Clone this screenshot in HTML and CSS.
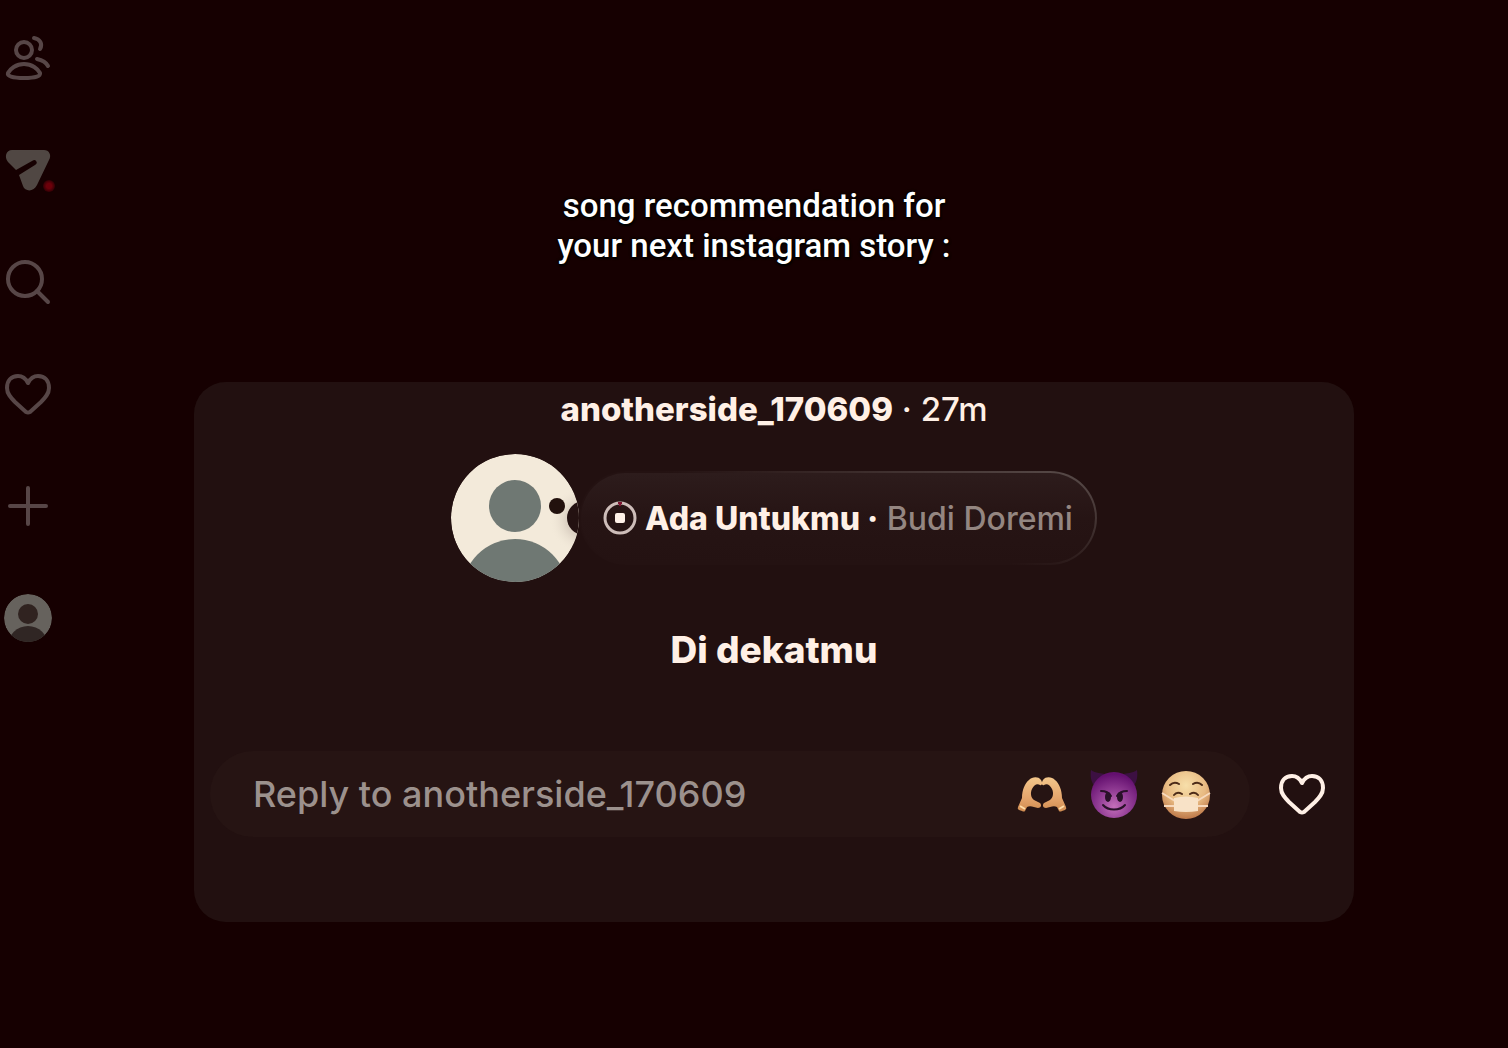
FILE: index.html
```html
<!DOCTYPE html>
<html lang="en">
	<head>
		<meta charset="utf-8">
		<title>Story</title>
		<link rel="stylesheet" href="styles.css">
	</head>
	<body>
		<nav class="sidebar">
			<a href="#friends" aria-label="Friends">
				<svg class="icon" viewBox="0 0 48 48">
					<circle cx="20" cy="16" r="8"/>
					<path d="M4 39C6 35 12 30 20 30S34 35 36 39C37 42 32 44 20 44S3 42 4 39Z"/>
					<path d="M30 4C36 5 39 10 36 15M33 25C38 26 42 28 44 32"/>
				</svg>
			</a>
			<a href="#messages" aria-label="Messages">
				<svg class="icon" viewBox="0 0 48 48">
					<path class="solid" d="M8 4H40C45 4 48 9 45 14L33 39C30 46 21 46 19 40L15 29L31 19Q34 17 32 15Q31 13 28 15L12 24L4 16C0 11 2 4 8 4Z"/>
				</svg>
				<span class="badge"></span>
			</a>
			<a href="#search" aria-label="Search">
				<svg class="icon" viewBox="0 0 48 48">
					<circle cx="21" cy="21" r="17"/>
					<path d="M33 33L44 44"/>
				</svg>
			</a>
			<a href="#activity" aria-label="Activity">
				<svg class="icon" viewBox="0 0 48 48">
					<path d="M24 13C22 9 18 6 14 6C7 6 3 11 3 18C3 24 7 28 11 32L22 42Q24 43 26 42L37 32C41 28 45 24 45 18C45 11 41 6 34 6C30 6 26 9 24 13Z"/>
				</svg>
			</a>
			<a href="#create" aria-label="Create">
				<svg class="icon" viewBox="0 0 48 48">
					<path d="M24 6V42M6 24H42"/>
				</svg>
			</a>
			<a href="#profile" aria-label="Profile">
				<svg class="icon-profile" viewBox="0 0 48 48">
					<clipPath id="profile-clip"><circle cx="24" cy="24" r="24"/></clipPath>
					<g clip-path="url(#profile-clip)">
						<circle cx="24" cy="24" r="24" fill="#66625d"/>
						<circle cx="24" cy="20" r="10" fill="#302320"/>
						<circle cx="24" cy="52" r="20" fill="#302624"/>
					</g>
				</svg>
			</a>
		</nav>

		<main class="story">
			<h1 class="caption">song recommendation for<br>your next instagram story :</h1>

			<section class="card">
				<p class="author"><b>anotherside_170609</b> · 27m</p>

				<div class="note">
					<svg class="avatar" viewBox="0 0 128 128">
						<defs>
							<clipPath id="avatar-clip"><circle cx="64" cy="64" r="64"/></clipPath>
							<radialGradient id="bite">
								<stop offset="0.5" stop-color="#ddd2c4"/>
								<stop offset="1" stop-color="#f3eada" stop-opacity="0"/>
							</radialGradient>
						</defs>
						<g clip-path="url(#avatar-clip)">
							<circle cx="64" cy="64" r="64" fill="#f3eada"/>
							<circle cx="132" cy="66" r="34" fill="url(#bite)"/>
							<circle cx="64" cy="52" r="26" fill="#6f7873"/>
							<circle cx="64" cy="138" r="53" fill="#6f7873"/>
							<circle cx="106" cy="52" r="8" fill="#22110d"/>
							<circle cx="133" cy="64" r="17" fill="#231111"/>
						</g>
					</svg>
					<div class="song">
						<svg class="song-icon" viewBox="0 0 34 34">
							<circle cx="17" cy="17" r="15" fill="none" stroke="#cdbdb9" stroke-width="3"/>
							<rect x="12" y="12" width="10" height="10" rx="2" fill="#fff1e8"/>
							<path d="M15 2H19M17 1V5" stroke="#7d1430" stroke-width="2"/>
						</svg>
						<p><b>Ada Untukmu ·</b> Budi Doremi</p>
					</div>
				</div>

				<p class="lyric">Di dekatmu</p>

				<form class="actions">
					<div class="reply">
						<input type="text" aria-label="Reply" placeholder="Reply to anotherside_170609">
						<button type="button" aria-label="Heart hands">
							<svg viewBox="0 0 50 50">
								<defs>
									<linearGradient id="skin" x1="0" y1="0" x2="0" y2="1">
										<stop offset="0" stop-color="#f3c78b"/>
										<stop offset="0.6" stop-color="#e5a56c"/>
										<stop offset="1" stop-color="#d08c50"/>
									</linearGradient>
									<path id="hand" d="M1 38L5 29C5 21 8 14 12 11C15 8 21 7 24 11C26 14 25 17 23 16C20 14 17 16 15 20C13 24 14 29 17 31L23 34C25 36 24 39 21 39C17 38 13 36 10 38L8 42Q7 43 5 42L2 41Q0 40 1 38Z"/>
								</defs>
								<use href="#hand" fill="url(#skin)"/>
								<use href="#hand" fill="url(#skin)" transform="matrix(-1 0 0 1 50 0)"/>
								<path d="M3 37L8 40M47 37L42 40" stroke="#ffdca6" stroke-width="2"/>
							</svg>
						</button>
						<button type="button" aria-label="Smiling devil">
							<svg viewBox="0 0 50 50">
								<defs>
									<radialGradient id="devil" cx="0.5" cy="0.75" r="0.7">
										<stop offset="0" stop-color="#c56fba"/>
										<stop offset="0.45" stop-color="#964198"/>
										<stop offset="1" stop-color="#64106f"/>
									</radialGradient>
								</defs>
								<path d="M2 1C7 5 12 3 17 6L6 18C2 13 1 7 2 1ZM48 1C43 5 38 3 33 6L44 18C48 13 49 7 48 1Z" fill="#3c1042"/>
								<circle cx="25" cy="26" r="23" fill="url(#devil)"/>
								<path d="M12 22Q19 22 22 27M38 22Q31 22 28 27M14 36C19 42 31 42 36 36" fill="none" stroke="#291129" stroke-width="2" stroke-linecap="round"/>
								<ellipse cx="19" cy="28" rx="3" ry="5" fill="#291129"/>
								<ellipse cx="31" cy="28" rx="3" ry="5" fill="#291129"/>
							</svg>
						</button>
						<button type="button" aria-label="Face with mask">
							<svg viewBox="0 0 50 50">
								<defs>
									<radialGradient id="face" cx="0.5" cy="0.3" r="0.75">
										<stop offset="0" stop-color="#f7dfaa"/>
										<stop offset="0.55" stop-color="#e8ba82"/>
										<stop offset="1" stop-color="#b66d3f"/>
									</radialGradient>
								</defs>
								<circle cx="25" cy="26" r="24" fill="url(#face)"/>
								<path d="M9 16Q13 12 18 15M41 16Q37 12 32 15M13 26Q16 22 21 25M37 26Q34 22 29 25" fill="none" stroke="#4c2b18" stroke-width="2" stroke-linecap="round"/>
								<path d="M1 24L14 32M49 24L36 32M3 37H14M47 37H36" stroke="#f7d9bd" stroke-width="2"/>
								<path d="M13 29Q25 26 37 29V42Q25 44 13 42Z" fill="#f8e2c7"/>
							</svg>
						</button>
					</div>
					<button type="button" class="like" aria-label="Like">
						<svg class="icon" viewBox="0 0 48 48">
							<path d="M24 13C22 9 18 6 14 6C7 6 3 11 3 18C3 24 7 28 11 32L22 42Q24 43 26 42L37 32C41 28 45 24 45 18C45 11 41 6 34 6C30 6 26 9 24 13Z"/>
						</svg>
					</button>
				</form>
			</section>
		</main>
	</body>
</html>
```

FILE: styles.css
```css
* {
	box-sizing: border-box;
}

body {
	display: flex;
	margin: 0;
	min-height: 100vh;
	background-color: #160001;
	color: #fff0e6;
	font-family: Inter, "Liberation Sans", sans-serif;
}

h1, p {
	margin: 0;
}

button {
	display: flex;
	padding: 0;
	border: 0;
	background: none;
	color: inherit;
}

/* left navigation */
.sidebar {
	display: flex;
	flex-direction: column;
	gap: 64px;
	width: 56px;
	padding: 34px 4px;
	color: #574647;
}

.sidebar a {
	position: relative;
	height: 48px;
	color: inherit;
}

.icon, .icon-profile {
	display: block;
	width: 48px;
	height: 48px;
}

.icon {
	fill: none;
	stroke: currentColor;
	stroke-width: 4;
	stroke-linecap: round;
	stroke-linejoin: round;
}

.icon .solid {
	fill: #504743;
	stroke: none;
}

.badge {
	position: absolute;
	right: -3px;
	bottom: 2px;
	width: 12px;
	height: 12px;
	border-radius: 50%;
	background: radial-gradient(#6c000a 30%, #2c0004 75%);
}

/* story */
.story {
	flex: 1;
	padding: 186px 154px 0 138px;
}

.caption {
	padding-right: 40px;
	color: #fff;
	font-family: Roboto, sans-serif;
	font-size: 33px;
	font-weight: 500;
	line-height: 40px;
	text-align: center;
	text-shadow: 0 0 3px #000, 0 0 3px #000, 1px 2px 2px #000;
}

.card {
	margin-top: 116px;
	padding: 6px 28px 85px 16px;
	border-radius: 32px;
	background-color: #221010;
}

.author {
	padding-left: 12px;
	font-size: 33px;
	font-weight: 500;
	line-height: 42px;
	text-align: center;
}

.author b, .song b {
	font-weight: 800;
}

.note {
	display: flex;
	align-items: center;
	justify-content: center;
	margin: 24px 0 44px 12px;
}

.avatar {
	width: 128px;
	height: 128px;
}

.song {
	display: flex;
	align-items: center;
	gap: 8px;
	height: 94px;
	padding: 0 22px;
	border: 2px solid transparent;
	border-radius: 47px;
	/* glass rim, brightest at the top right */
	background:
		linear-gradient(#2d1c1c, #261414 50%, #241212) padding-box,
		linear-gradient(15deg, #241212 50%, #5a4d4b) border-box;
	color: #948681;
	font-size: 32px;
	font-weight: 500;
}

.song b {
	color: #fff0e6;
}

.song-icon {
	width: 34px;
	height: 34px;
}

.lyric {
	padding-left: 12px;
	font-size: 37px;
	font-weight: 800;
	line-height: 48px;
	text-align: center;
}

.actions {
	display: flex;
	align-items: center;
	gap: 28px;
	margin-top: 77px;
}

.reply {
	display: flex;
	flex: 1;
	align-items: center;
	gap: 22px;
	height: 86px;
	padding: 0 39px 0 43px;
	border-radius: 43px;
	background-color: #261413;
}

.reply input {
	flex: 1;
	min-width: 0;
	padding: 0;
	border: 0;
	outline: 0;
	background: none;
	color: #fff0e6;
	font: 500 36px Inter, "Liberation Sans", sans-serif;
}

.reply input::placeholder {
	color: #9c918d;
}

.reply svg {
	width: 50px;
	height: 50px;
}
```
